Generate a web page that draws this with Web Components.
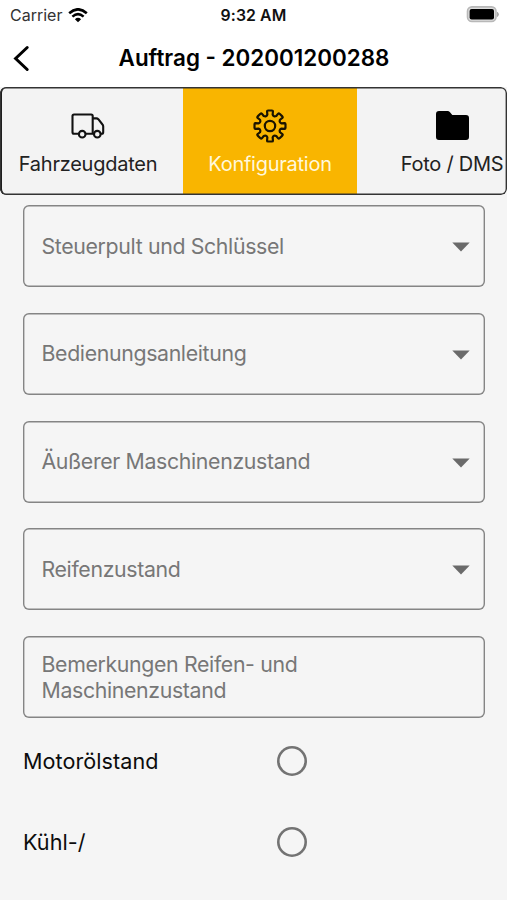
<!DOCTYPE html>
<html lang="de">
<head>
<meta charset="utf-8">
<title>Auftrag</title>
<style>
html,body{margin:0;height:100%}
body{font-family:Inter,"Liberation Sans",sans-serif;background:#f5f5f5;overflow:hidden}
</style>
</head>
<body>
<order-screen></order-screen>
<script>
const define = (name, html, setup) => customElements.define(name, class extends HTMLElement {
  constructor() {
    super();
    this.attachShadow({ mode: 'open' }).innerHTML = html;
  }
  connectedCallback() { if (setup) setup(this, this.shadowRoot); }
});

define('status-bar', `<style>
:host{display:grid;grid-template-columns:1fr auto 1fr;align-items:center;height:30px;padding:0 8px 0 10px;font-size:16px;box-sizing:border-box;color:#111}
.left{display:flex;align-items:center;gap:6px;color:#333}
.time{font-weight:600;font-size:15.8px;letter-spacing:.1px;margin-left:-2px}
.right{justify-self:end;display:flex;margin-top:-2px}
svg{display:block}
</style>
<div class="left"><span>Carrier</span>
<svg width="20" height="15" viewBox="0 0 20 15" fill="none" stroke="#000"><path d="M1.2 5.2Q10-2.6 18.8 5.2" stroke-width="2.6"/><path d="M4.4 8.6Q10 3.7 15.6 8.6" stroke-width="2.5"/><path d="M6.9 11.2Q10 8.3 13.1 11.2L10 14.3Z" fill="#000" stroke="none"/></svg></div>
<div class="time">9:32 AM</div>
<div class="right"><svg width="33" height="17" viewBox="0 0 33 17"><rect x="1.500" y=".9" width="28.500" height="14.600" rx="4.4" fill="#ddd" stroke="#b8b8b8" stroke-width="1.6"/><rect x="3.600" y="3" width="24.400" height="10.400" rx="2"/><path d="M31.500 6.200q2 2.200 0 4.400z" fill="#999" stroke="#999" stroke-width=".6"/></svg></div>`);

define('nav-header', `<style>
:host{display:grid;grid-template-columns:60px 1fr 60px;align-items:center;height:57px;padding-bottom:1px;box-sizing:border-box}
h1{margin:0;text-align:center;font-size:22.4px;font-weight:600;white-space:nowrap;line-height:28px;color:#000}
h1{padding-left:1px}
svg{display:block;margin-left:12px}
</style>
<svg width="18" height="27" viewBox="0 0 18 27" fill="none" stroke="#000" stroke-width="3" stroke-linecap="round" stroke-linejoin="miter"><path d="M15.200 2.500 3.600 13.500 15.200 24.500"/></svg>
<h1><slot></slot></h1>`);

define('tab-strip', `<style>
:host{position:relative;display:flex;gap:8px;height:108px;box-sizing:border-box;padding-left:1px;border-radius:6px;overflow:hidden;background:#f3f3f3;flex:none}
:host::after{content:"";position:absolute;inset:0;border-radius:6px;box-shadow:inset 0 0 0 1.4px #333,inset 2px 0 0 #111;pointer-events:none}
</style><slot></slot>`);

define('tab-item', `<style>
:host{display:flex;flex-direction:column;align-items:center;flex:0 0 174px;box-sizing:border-box;padding-top:20px;color:#222;font-size:20px;line-height:26px}
:host([active]){background:#f9b500;color:#fff8dc}
.icon{height:37px;display:flex;align-items:center;margin-bottom:7px}
.label{white-space:nowrap;letter-spacing:-.25px}
</style><div class="icon"><slot name="icon"></slot></div><span class="label"><slot></slot></span>`);

define('form-field', `<style>
:host{display:flex;align-items:center;justify-content:space-between;height:82px;box-sizing:border-box;padding:0 15.500px 0 19px;border-radius:6px;box-shadow:inset 0 0 0 1.4px #858585;font-size:21.300px;line-height:26px;letter-spacing:-.35px;color:#777}
svg{display:block;margin-top:2px}
:host([select]) .label{margin-top:-1px}
:host(:not([select])) svg{display:none}
</style><span class="label"><slot></slot></span><svg width="18" height="10" viewBox="0 0 18 10"><path d="M.3.5H17.700L9 9.600Z" fill="#6a6a6a"/></svg>`);

define('radio-row', `<style>
:host{display:grid;grid-template-columns:254px 1fr;align-items:center;height:81px;font-size:21.600px;color:#0c0c0c}
.label{letter-spacing:.06px}
i{display:block;width:30px;height:30px;box-sizing:border-box;border-radius:50%;box-shadow:inset 0 0 0 2.6px #737373}
</style><span class="label"><slot></slot></span><i></i>`);

define('order-screen', `<style>
:host{display:flex;flex-direction:column;height:900px;width:507px;background:#f5f5f5;overflow:hidden}
.top{background:#fff}
.form{display:flex;flex-direction:column;gap:25.800px;padding:10px 22px 0 22.500px}
.checks{padding:2px 0 0 23px}
svg{display:block}
</style>
<div class="top"><status-bar></status-bar><nav-header>Auftrag - 202001200288</nav-header></div>
<tab-strip>
<tab-item>Fahrzeugdaten<svg slot="icon" width="34" height="26" viewBox="0 0 34 26" fill="none" stroke="#111" stroke-width="2.100" stroke-linejoin="round"><path d="M7.500 20.700H3Q1.500 20.700 1.500 19.200V3Q1.500 1.500 3 1.500H20.200Q21.700 1.500 21.700 3V20.700H15"/><path d="M21.700 5.400H25.500Q26.500 5.400 27.300 6.200L31.500 11.500Q32.200 12.300 32.200 13.500V19.200Q32.200 20.700 30.800 20.700H30M21.700 20.700H22.800"/><circle cx="11.200" cy="21.200" r="3.300"/><circle cx="26.300" cy="21.200" r="3.300"/></svg></tab-item>
<tab-item active>Konfiguration<svg slot="icon" id="gear" width="34" height="34" viewBox="-17 -17 34 34" fill="none" stroke="#1b1400" stroke-width="2.200" stroke-linejoin="round"><circle r="5.200"/></svg></tab-item>
<tab-item>Foto / DMS<svg slot="icon" width="33" height="29" viewBox="0 0 33 29"><path d="M3 0H11.500Q13 0 14 1.200L16.300 4H30Q33 4 33 7V26Q33 29 30 29H3Q0 29 0 26V3Q0 0 3 0Z"/></svg></tab-item>
</tab-strip>
<div class="form">
<form-field select>Steuerpult und Schlüssel</form-field>
<form-field select>Bedienungsanleitung</form-field>
<form-field select>Äußerer Maschinenzustand</form-field>
<form-field select>Reifenzustand</form-field>
<form-field>Bemerkungen Reifen- und<br>Maschinenzustand</form-field>
</div>
<div class="checks"><radio-row>Motorölstand</radio-row><radio-row>Kühl-/</radio-row></div>`, (host, root) => {
  // Gear outline: eight teeth around the hub, with rounded valleys.
  const point = (r, deg) => {
    const a = deg * Math.PI / 180;
    return (r * Math.cos(a)).toFixed(2) + ' ' + (r * Math.sin(a)).toFixed(2);
  };
  let d = '';
  for (let i = 0; i < 8; i++) {
    const c = i * 45 - 90;
    d += (i ? 'L' : 'M') + point(11.8, c - 13) + 'L' + point(14.800, c - 11.500) + 'Q' + point(15.700, c - 11) + ' ' + point(15.600, c - 7)
      + 'L' + point(15.600, c + 7) + 'Q' + point(15.700, c + 11) + ' ' + point(14.800, c + 11.500) + 'L' + point(11.800, c + 13)
      + 'Q' + point(9.600, c + 22.500) + ' ' + point(11.800, c + 32);
  }
  const path = document.createElementNS('http://www.w3.org/2000/svg', 'path');
  path.setAttribute('d', d + 'Z');
  root.getElementById('gear').append(path);
});
</script>
</body>
</html>
